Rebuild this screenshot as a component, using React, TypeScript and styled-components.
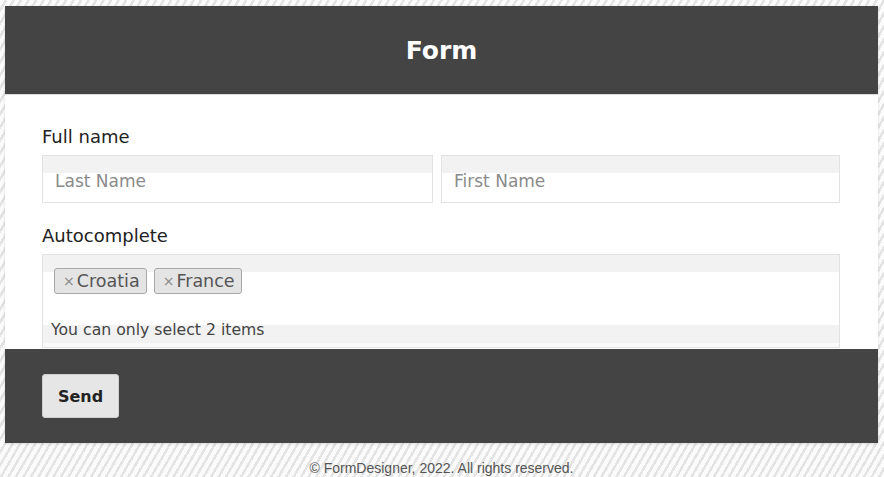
import React from 'react';
import styled, { createGlobalStyle } from 'styled-components';

const GlobalStyle = createGlobalStyle`
    html, body {
        margin: 0;
        padding: 0;
    }
    body {
        font-family: "DejaVu Sans", "Open Sans", sans-serif;
        background-color: #fbfbfb;
        background-image: repeating-linear-gradient(120deg, #fbfbfb 0px, #fbfbfb 4px, #e4e4e4 4px, #e4e4e4 6.5px);
        min-height: 477px;
    }
`

const Page = styled.div`
    padding: 6px 6px 0 5px;
`

const Card = styled.form`
    display: flex;
    flex-direction: column;
    box-shadow: 0 1px 3px rgba(0, 0, 0, 0.12);
`

const Header = styled.header`
    height: 88px;
    display: flex;
    align-items: center;
    justify-content: center;
    background: #444444;
    border-bottom: 1px solid #dcdcdc;
`

const Title = styled.h1`
    margin: 0;
    color: #ffffff;
    font-size: 25px;
    font-weight: bold;
`

const Body = styled.div`
    background: #ffffff;
    padding: 32px 38px 1px 37px;
    display: flex;
    flex-direction: column;
`

const Field = styled.div`
    display: flex;
    flex-direction: column;
    margin-bottom: ${(p: { last?: boolean }) => (p.last ? '0' : '23px')};
`

const Label = styled.label`
    font-size: 18px;
    color: #222;
    line-height: 20px;
    margin-bottom: 8px;
`

const Row = styled.div`
    display: grid;
    grid-template-columns: 391px 399px;
    gap: 8px;
`

const TextInput = styled.input`
    box-sizing: border-box;
    height: 48px;
    border: 1px solid #e2e2e2;
    background: linear-gradient(#f2f2f2 0 17px, #ffffff 17px);
    padding: 4px 12px 0 12px;
    font-family: inherit;
    font-size: 17px;
    color: #333;
    outline: none;

    &::placeholder {
        color: #8a8a8a;
    }
`

const TagBox = styled.div`
    box-sizing: border-box;
    height: 94px;
    border: 1px solid #e2e2e2;
    background: linear-gradient(#f2f2f2 0 17px, #ffffff 17px 70px, #f2f2f2 70px 88px, #fafafa 88px);
    padding: 13px 8px 0 11px;
    display: flex;
    flex-direction: column;
`

const Tags = styled.div`
    display: flex;
    gap: 7px;
`

const Tag = styled.span`
    display: inline-flex;
    align-items: center;
    height: 26px;
    box-sizing: border-box;
    padding: 0 6px 0 8px;
    border: 1px solid #a8a8a8;
    border-radius: 3px;
    background: #e4e4e4;
    color: #555;
    font-size: 17.5px;
`

const TagRemove = styled.span`
    color: #888;
    font-size: 14px;
    margin-right: 2px;
`

const Hint = styled.div`
    margin-top: 26px;
    margin-left: -3px;
    font-size: 15.7px;
    color: #444;
`

const Footer = styled.footer`
    height: 94px;
    background: #444444;
    display: flex;
    align-items: center;
    padding-left: 37px;
`

const SendButton = styled.button`
    width: 77px;
    height: 44px;
    border: 1px solid #cfcfcf;
    border-radius: 3px;
    background: #e6e6e6;
    color: #222;
    font-family: inherit;
    font-size: 16px;
    font-weight: bold;
    cursor: pointer;
`

const Copyright = styled.p`
    margin: 17px 0 0 0;
    text-align: center;
    font-family: "Liberation Sans", Arial, sans-serif;
    font-size: 14px;
    color: #555;
`

const App = () => {
    return (
        <Page>
            <GlobalStyle />
            <Card onSubmit={e => e.preventDefault()}>
                <Header>
                    <Title>Form</Title>
                </Header>
                <Body>
                    <Field>
                        <Label>Full name</Label>
                        <Row>
                            <TextInput placeholder="Last Name" />
                            <TextInput placeholder="First Name" />
                        </Row>
                    </Field>
                    <Field last>
                        <Label>Autocomplete</Label>
                        <TagBox>
                            <Tags>
                                <Tag><TagRemove>×</TagRemove>Croatia</Tag>
                                <Tag><TagRemove>×</TagRemove>France</Tag>
                            </Tags>
                            <Hint>You can only select 2 items</Hint>
                        </TagBox>
                    </Field>
                </Body>
                <Footer>
                    <SendButton type="submit">Send</SendButton>
                </Footer>
            </Card>
            <Copyright>© FormDesigner, 2022. All rights reserved.</Copyright>
        </Page>
    )
}

export default App
